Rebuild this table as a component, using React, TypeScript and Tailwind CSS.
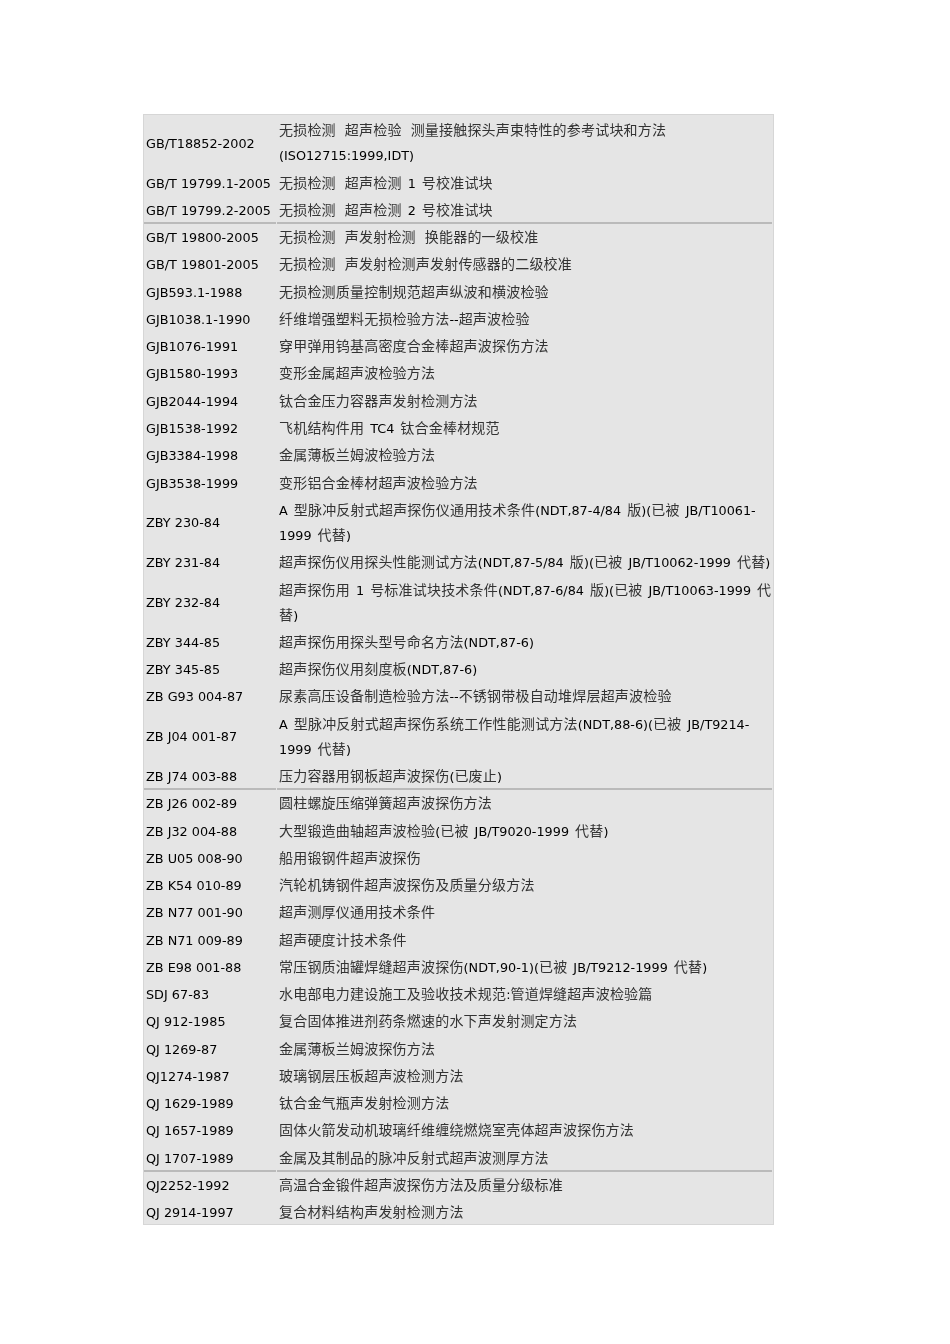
import React from "react";

type Row = { code: string; text: string; sep?: boolean };

const rows: Row[] = [
  { code: "GB/T18852-2002", text: "无损检测 超声检验 测量接触探头声束特性的参考试块和方法\n(ISO12715:1999,IDT)" },
  { code: "GB/T 19799.1-2005", text: "无损检测 超声检测 1 号校准试块" },
  { code: "GB/T 19799.2-2005", text: "无损检测 超声检测 2 号校准试块" },
  { code: "GB/T 19800-2005", text: "无损检测 声发射检测 换能器的一级校准", sep: true },
  { code: "GB/T 19801-2005", text: "无损检测 声发射检测声发射传感器的二级校准" },
  { code: "GJB593.1-1988", text: "无损检测质量控制规范超声纵波和横波检验" },
  { code: "GJB1038.1-1990", text: "纤维增强塑料无损检验方法--超声波检验" },
  { code: "GJB1076-1991", text: "穿甲弹用钨基高密度合金棒超声波探伤方法" },
  { code: "GJB1580-1993", text: "变形金属超声波检验方法" },
  { code: "GJB2044-1994", text: "钛合金压力容器声发射检测方法" },
  { code: "GJB1538-1992", text: "飞机结构件用 TC4 钛合金棒材规范" },
  { code: "GJB3384-1998", text: "金属薄板兰姆波检验方法" },
  { code: "GJB3538-1999", text: "变形铝合金棒材超声波检验方法" },
  { code: "ZBY 230-84", text: "A 型脉冲反射式超声探伤仪通用技术条件(NDT,87-4/84 版)(已被 JB/T10061-\n1999 代替)" },
  { code: "ZBY 231-84", text: "超声探伤仪用探头性能测试方法(NDT,87-5/84 版)(已被 JB/T10062-1999 代替)" },
  { code: "ZBY 232-84", text: "超声探伤用 1 号标准试块技术条件(NDT,87-6/84 版)(已被 JB/T10063-1999 代\n替)" },
  { code: "ZBY 344-85", text: "超声探伤用探头型号命名方法(NDT,87-6)" },
  { code: "ZBY 345-85", text: "超声探伤仪用刻度板(NDT,87-6)" },
  { code: "ZB G93 004-87", text: "尿素高压设备制造检验方法--不锈钢带极自动堆焊层超声波检验" },
  { code: "ZB J04 001-87", text: "A 型脉冲反射式超声探伤系统工作性能测试方法(NDT,88-6)(已被 JB/T9214-\n1999 代替)" },
  { code: "ZB J74 003-88", text: "压力容器用钢板超声波探伤(已废止)" },
  { code: "ZB J26 002-89", text: "圆柱螺旋压缩弹簧超声波探伤方法", sep: true },
  { code: "ZB J32 004-88", text: "大型锻造曲轴超声波检验(已被 JB/T9020-1999 代替)" },
  { code: "ZB U05 008-90", text: "船用锻钢件超声波探伤" },
  { code: "ZB K54 010-89", text: "汽轮机铸钢件超声波探伤及质量分级方法" },
  { code: "ZB N77 001-90", text: "超声测厚仪通用技术条件" },
  { code: "ZB N71 009-89", text: "超声硬度计技术条件" },
  { code: "ZB E98 001-88", text: "常压钢质油罐焊缝超声波探伤(NDT,90-1)(已被 JB/T9212-1999 代替)" },
  { code: "SDJ 67-83", text: "水电部电力建设施工及验收技术规范:管道焊缝超声波检验篇" },
  { code: "QJ 912-1985", text: "复合固体推进剂药条燃速的水下声发射测定方法" },
  { code: "QJ 1269-87", text: "金属薄板兰姆波探伤方法" },
  { code: "QJ1274-1987", text: "玻璃钢层压板超声波检测方法" },
  { code: "QJ 1629-1989", text: "钛合金气瓶声发射检测方法" },
  { code: "QJ 1657-1989", text: "固体火箭发动机玻璃纤维缠绕燃烧室壳体超声波探伤方法" },
  { code: "QJ 1707-1989", text: "金属及其制品的脉冲反射式超声波测厚方法" },
  { code: "QJ2252-1992", text: "高温合金锻件超声波探伤方法及质量分级标准", sep: true },
  { code: "QJ 2914-1997", text: "复合材料结构声发射检测方法" },
];

const CJK = /[\u2E80-\u9FFF\uFF00-\uFFEF\u3000-\u303F]/;
const TOKEN = /[\u2E80-\u9FFF\uFF00-\uFFEF\u3000-\u303F]+| +|[^\u2E80-\u9FFF\uFF00-\uFFEF\u3000-\u303F ]+/g;

const latCls = "font-['DejaVu_Sans',sans-serif] text-[12.8px] text-[#000000]";
const cjkCls = "font-['Noto_Sans_CJK_SC',sans-serif] text-[14px] tracking-[0.2px] font-normal text-[#333333]";

function renderLine(s: string) {
  const tokens = s.match(TOKEN) || [];
  return tokens.map((t, i) => {
    if (CJK.test(t)) {
      return (
        <span key={i} className={cjkCls}>
          {t}
        </span>
      );
    }
    if (t.trim() === "") {
      const prev = tokens[i - 1];
      const next = tokens[i + 1];
      const pc = !!prev && CJK.test(prev);
      const nc = !!next && CJK.test(next);
      if (pc && nc) return <span key={i} className="inline-block w-[9px]" />;
      if (pc || nc) return <span key={i} className="inline-block w-[6px]" />;
    }
    return (
      <span key={i} className={latCls}>
        {t}
      </span>
    );
  });
}

function Cell({ text }: { text: string }) {
  const lines = text.split("\n");
  return (
    <>
      {lines.map((l, i) => (
        <div key={i} className="whitespace-nowrap leading-[25px] h-[25px]">
          {renderLine(l)}
        </div>
      ))}
    </>
  );
}

export default function App() {
  return (
    <div className="w-[950px] min-h-[1344px] bg-white pt-[114px] pl-[143px]">
      <div className="w-[631px] border border-[#d6d6d6] bg-[#e5e5e5] grayscale">
        {rows.map((r, i) => {
          const double = r.text.includes("\n");
          const h = double ? "h-[52.4px]" : "h-[27.28px]";
          const sep = r.sep ? "shadow-[inset_0_2px_0_#bababa]" : "";
          return (
            <div key={i} className={`flex ${h}`}>
              <div className={`w-[132px] shrink-0 mr-[1px] pl-[2px] flex items-center ${sep}`}>
                <div className="pt-[2.2px]">
                  <Cell text={r.code} />
                </div>
              </div>
              <div className={`flex-1 min-w-0 pl-[2px] flex items-center mr-[1px] ${sep}`}>
                <div className="pt-[2.2px]">
                  <Cell text={r.text} />
                </div>
              </div>
            </div>
          );
        })}
      </div>
    </div>
  );
}
